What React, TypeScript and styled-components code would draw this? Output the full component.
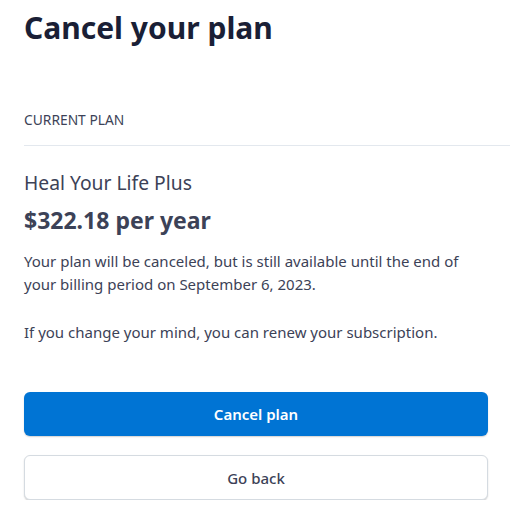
import React from "react"
import styled, { createGlobalStyle } from "styled-components"

const GlobalStyle = createGlobalStyle`
    body {
        margin: 0;
        background: #ffffff;
        font-family: "Noto Sans", "Open Sans", sans-serif;
        color: #1a1f36;
    }
`

const Page = styled.div`
    padding: 8px 0 0 24px;
`

const Title = styled.h1`
    margin: 0;
    font-size: 30px;
    line-height: 40px;
    font-weight: 700;
    color: #1a1f36;
`

const SectionLabel = styled.div`
    margin-top: 62px;
    padding-bottom: 15px;
    border-bottom: 1px solid #e3e8ee;
    font-size: 13.8px;
    line-height: 20px;
    color: #3c4257;
`

const PlanName = styled.div`
    margin-top: 24px;
    font-size: 19.3px;
    line-height: 26px;
    color: #3c4257;
`

const Price = styled.div`
    margin-top: 9px;
    font-size: 23px;
    line-height: 30px;
    font-weight: 700;
    color: #3c4257;
`

const Text = styled.p`
    margin: 15px 0 0;
    padding-right: 40px;
    font-size: 15px;
    line-height: 23px;
    color: #3c4257;

    & + & {
        margin-top: 25px;
    }
`

const Actions = styled.div`
    display: flex;
    flex-direction: column;
    gap: 19px;
    margin-top: 48px;
    margin-right: 22px;
`

const Button = styled.button<{ $primary?: boolean }>`
    height: ${(p) => (p.$primary ? "44px" : "45px")};
    border-radius: 6px;
    font-family: inherit;
    font-size: 15px;
    font-weight: ${(p) => (p.$primary ? 600 : 500)};
    cursor: pointer;
    color: ${(p) => (p.$primary ? "#ffffff" : "#3c4257")};
    background: ${(p) => (p.$primary ? "#0074d4" : "#ffffff")};
    border: ${(p) => (p.$primary ? "none" : "1px solid #d5dbe1")};
    box-shadow: 0 1px 1.5px rgba(0, 0, 0, 0.18);
`

export default function App() {
    return (
        <>
            <GlobalStyle />
            <Page>
                <Title>Cancel your plan</Title>
                <SectionLabel>CURRENT PLAN</SectionLabel>
                <PlanName>Heal Your Life Plus</PlanName>
                <Price>$322.18 per year</Price>
                <Text>
                    Your plan will be canceled, but is still available until the end of your billing period on September 6, 2023.
                </Text>
                <Text>If you change your mind, you can renew your subscription.</Text>
                <Actions>
                    <Button $primary>Cancel plan</Button>
                    <Button>Go back</Button>
                </Actions>
            </Page>
        </>
    )
}
